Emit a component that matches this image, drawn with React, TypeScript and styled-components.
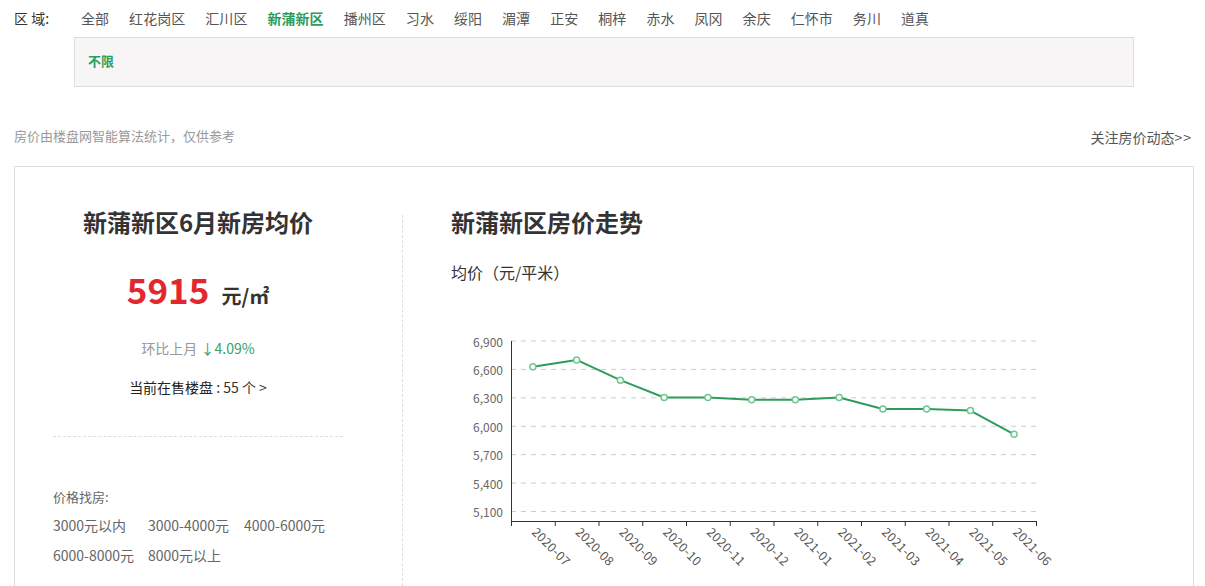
import React from "react";
import styled, { createGlobalStyle } from "styled-components";

const Global = createGlobalStyle`
  html, body { margin: 0; padding: 0; background: #fff; }
  body { font-family: "Noto Sans CJK SC", "Noto Sans", sans-serif; color: #333; }
  * { box-sizing: border-box; }
`;

const GREEN = "#2e9d5b";

const Page = styled.div`
  padding: 8px 0 0 14px;
  width: 1205px;
`;

const FilterRow = styled.div`
  display: flex;
  align-items: center;
  height: 20px;
  font-size: 14px;
  line-height: 20px;
`;

const FilterLabel = styled.span`
  width: 67px;
  color: #333;
  flex: none;
`;

const FilterItem = styled.span<{ $active?: boolean }>`
  margin-right: 20px;
  letter-spacing: 0.05px;
  color: ${(p) => (p.$active ? GREEN : "#555")};
  font-weight: ${(p) => (p.$active ? 700 : 400)};
  cursor: pointer;
`;

const SubBox = styled.div`
  margin: 9px 0 0 60px;
  width: 1060px;
  height: 50px;
  background: #f7f5f5;
  border: 1px solid #ddd;
  padding-left: 13px;
  display: flex;
  align-items: center;
`;

const SubItem = styled.span`
  font-size: 13px;
  line-height: 16px;
  margin-top: -2px;
  font-weight: 700;
  color: ${GREEN};
`;

const NoteRow = styled.div`
  margin-top: 40px;
  width: 1180px;
  display: flex;
  justify-content: space-between;
  align-items: center;
  height: 18px;
  line-height: 18px;
`;

const Note = styled.span`
  font-size: 13px;
  color: #999;
`;

const FollowLink = styled.span`
  font-size: 14px;
  color: #555;
  margin-right: 2px;
  margin-top: 2px;
`;

const Arrows = styled.span`
  letter-spacing: 1px;
`;

const Card = styled.div`
  margin-top: 21px;
  width: 1180px;
  height: 440px;
  border: 1px solid #ddd;
  border-bottom: none;
  padding-top: 39px;
  display: flex;
`;

const LeftCol = styled.div`
  width: 290px;
  margin-left: 38px;
  display: flex;
  flex-direction: column;
  flex: none;
`;

const Divider = styled.div`
  margin: 9px 0 0 59px;
  border-left: 1px dashed #ddd;
  flex: none;
`;

const RightCol = styled.div`
  padding-left: 48px;
  display: flex;
  flex-direction: column;
  flex: 1;
`;

const Title = styled.h2<{ $center?: boolean }>`
  margin: 0;
  font-size: 24px;
  line-height: 32px;
  font-weight: 700;
  color: #333;
  text-align: ${(p) => (p.$center ? "center" : "left")};
`;

const PriceRow = styled.div`
  margin-top: 27px;
  display: flex;
  justify-content: center;
  align-items: baseline;
  height: 48px;
  line-height: 48px;
`;

const PriceNum = styled.span`
  font-size: 35px;
  font-weight: 700;
  color: #e2282f;
`;

const PriceUnit = styled.span`
  margin-left: 12px;
  font-size: 20px;
  font-weight: 700;
  color: #333;
`;

const InfoLine = styled.div<{ $mt: number }>`
  margin-top: ${(p) => p.$mt}px;
  text-align: center;
  font-size: 14px;
  line-height: 20px;
`;

const Muted = styled.span`
  color: #999;
`;

const Down = styled.span`
  color: #35a06a;
`;

const Dark = styled.span`
  color: #222;
`;

const LinkText = styled.span`
  color: #333;
`;

const DashLine = styled.div`
  margin-top: 39px;
  border-top: 1px dashed #ddd;
`;

const PriceFindLabel = styled.div`
  margin-top: 50px;
  font-size: 13px;
  line-height: 20px;
  color: #666;
`;

const PriceGrid = styled.div`
  margin-top: 3px;
  display: grid;
  grid-template-columns: 95px 96px 99px;
`;

const PriceOpt = styled.span`
  font-size: 14px;
  line-height: 30px;
  color: #666;
  white-space: nowrap;
  cursor: pointer;
`;

const AxisCaption = styled.div`
  margin-top: 24px;
  font-size: 16px;
  line-height: 20px;
  color: #333;
`;

const ChartSvg = styled.svg`
  display: block;
  margin-top: 8px;
  overflow: visible;
  font-family: "Noto Sans CJK SC", "Noto Sans", sans-serif;
`;

const areas = [
  "全部", "红花岗区", "汇川区", "新蒲新区", "播州区", "习水", "绥阳", "湄潭",
  "正安", "桐梓", "赤水", "凤冈", "余庆", "仁怀市", "务川", "道真",
];

const months = [
  "2020-07", "2020-08", "2020-09", "2020-10", "2020-11", "2020-12",
  "2021-01", "2021-02", "2021-03", "2021-04", "2021-05", "2021-06",
];
const values = [6628, 6700, 6487, 6304, 6304, 6280, 6280, 6304, 6183, 6183, 6166, 5915];

// chart local coords: svg origin at page (451, 290)
const X0 = 60;
const X1 = 585;
const YB = 231;
const MIN = 5000;
const MAX = 6900;
const PX = 180 / (MAX - MIN);
const yOf = (v: number) => YB - (v - MIN) * PX;
const step = (X1 - X0) / months.length;
const xOf = (i: number) => X0 + step * (i + 0.5);
const ticks = [5100, 5400, 5700, 6000, 6300, 6600, 6900];

function TrendChart() {
  const pts = values.map((v, i) => `${xOf(i)},${yOf(v)}`).join(" ");
  return (
    <ChartSvg width={620} height={296} viewBox="0 0 620 296">
      {ticks.map((t) => (
        <g key={t}>
          <line x1={X0} x2={X1} y1={yOf(t)} y2={yOf(t)} stroke="#ccc" strokeDasharray="5 5" />
          <text x={X0 - 8} y={yOf(t)} textAnchor="end" dominantBaseline="central" fontSize={12} fill="#666">
            {t.toLocaleString("en-US")}
          </text>
        </g>
      ))}
      <line x1={X0 + 0.5} x2={X0 + 0.5} y1={yOf(MAX)} y2={YB} stroke="#333" />
      <line x1={X0} x2={X1} y1={YB + 0.5} y2={YB + 0.5} stroke="#333" />
      {Array.from({ length: months.length + 1 }).map((_, i) => (
        <line key={i} x1={X0 + step * i + 0.5} x2={X0 + step * i + 0.5} y1={YB} y2={YB + 5} stroke="#333" />
      ))}
      {months.map((m, i) => (
        <text
          key={m}
          transform={`translate(${xOf(i) + 2}, ${YB + 8}) rotate(45)`}
          fontSize={12.5}
          letterSpacing={0.3}
          fill="#555"
          dominantBaseline="central"
        >
          {m}
        </text>
      ))}
      <polyline points={pts} fill="none" stroke={GREEN} strokeWidth={2} strokeLinejoin="round" />
      {values.map((v, i) => (
        <circle key={i} cx={xOf(i)} cy={yOf(v)} r={3} fill="#fff" stroke="#6fc890" strokeWidth={1.5} />
      ))}
    </ChartSvg>
  );
}

export default function App() {
  return (
    <Page>
      <Global />
      <FilterRow>
        <FilterLabel>区 域:</FilterLabel>
        {areas.map((a) => (
          <FilterItem key={a} $active={a === "新蒲新区"}>
            {a}
          </FilterItem>
        ))}
      </FilterRow>
      <SubBox>
        <SubItem>不限</SubItem>
      </SubBox>
      <NoteRow>
        <Note>房价由楼盘网智能算法统计，仅供参考</Note>
        <FollowLink>
          关注房价动态<Arrows>&gt;&gt;</Arrows>
        </FollowLink>
      </NoteRow>
      <Card>
        <LeftCol>
          <Title $center>新蒲新区6月新房均价</Title>
          <PriceRow>
            <PriceNum>5915</PriceNum>
            <PriceUnit>元/㎡</PriceUnit>
          </PriceRow>
          <InfoLine $mt={25}>
            <Muted>环比上月 </Muted>
            <Down>↓4.09%</Down>
          </InfoLine>
          <InfoLine $mt={19}>
            <Dark>当前在售楼盘</Dark>
            <LinkText> : 55 个 &gt;</LinkText>
          </InfoLine>
          <DashLine />
          <PriceFindLabel>价格找房:</PriceFindLabel>
          <PriceGrid>
            <PriceOpt>3000元以内</PriceOpt>
            <PriceOpt>3000-4000元</PriceOpt>
            <PriceOpt>4000-6000元</PriceOpt>
            <PriceOpt>6000-8000元</PriceOpt>
            <PriceOpt>8000元以上</PriceOpt>
          </PriceGrid>
        </LeftCol>
        <Divider />
        <RightCol>
          <Title>新蒲新区房价走势</Title>
          <AxisCaption>均价（元/平米）</AxisCaption>
          <TrendChart />
        </RightCol>
      </Card>
    </Page>
  );
}
